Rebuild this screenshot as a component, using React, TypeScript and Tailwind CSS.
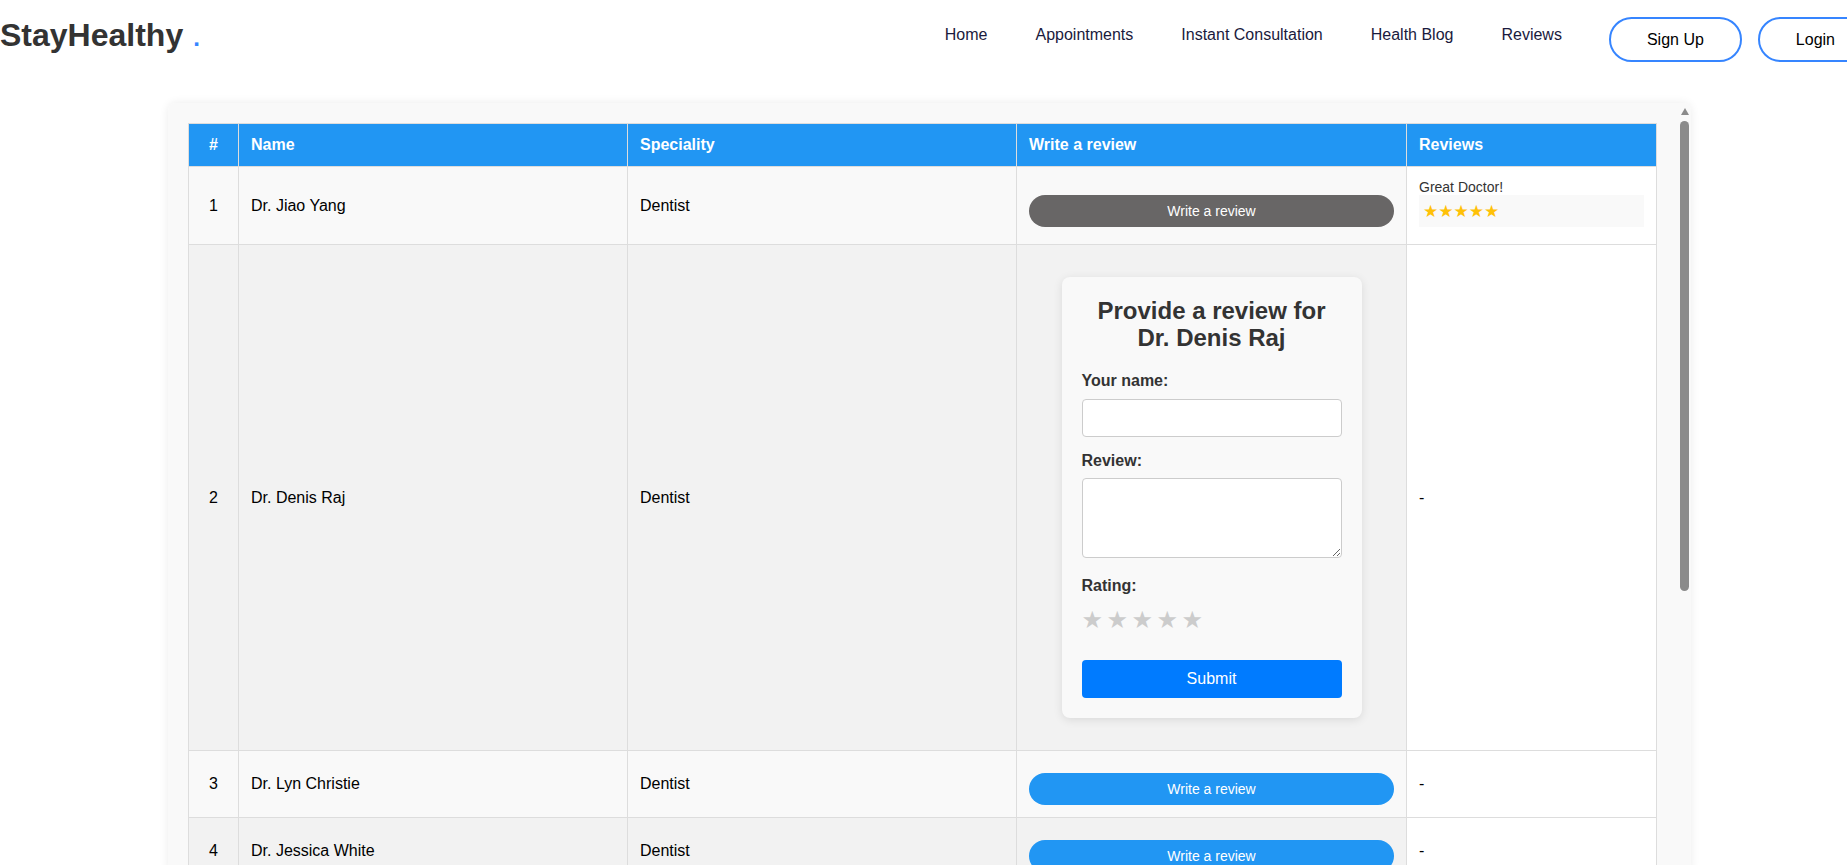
import { useState } from "react";

type Doctor = {
  id: number;
  name: string;
  speciality: string;
  review?: { text: string; rating: number };
};

const doctors: Doctor[] = [
  { id: 1, name: "Dr. Jiao Yang", speciality: "Dentist", review: { text: "Great Doctor!", rating: 5 } },
  { id: 2, name: "Dr. Denis Raj", speciality: "Dentist" },
  { id: 3, name: "Dr. Lyn Christie", speciality: "Dentist" },
  { id: 4, name: "Dr. Jessica White", speciality: "Dentist" },
  { id: 5, name: "Dr. Laura Evans", speciality: "Dentist" },
  { id: 6, name: "Dr. Mark Olsen", speciality: "Dentist" },
  { id: 7, name: "Dr. Priya Menon", speciality: "Dentist" },
  { id: 8, name: "Dr. Omar Haddad", speciality: "Dentist" },
  { id: 9, name: "Dr. Kate Moreno", speciality: "Dentist" },
  { id: 10, name: "Dr. Alan Brooks", speciality: "Dentist" },
];

const navLinks = ["Home", "Appointments", "Instant Consultation", "Health Blog", "Reviews"];

function ReviewForm({ doctor }: { doctor: Doctor }) {
  const [rating, setRating] = useState(0);

  return (
    <div className="mx-auto my-[20px] w-[300px] rounded-[8px] bg-[#f9f9f9] p-[20px] text-[#333] shadow-[0_2px_10px_rgba(0,0,0,0.1)]">
      <h2 className="mb-[21px] text-center text-[24px] font-bold leading-[27px]">
        Provide a review for {doctor.name}
      </h2>
      <label className="mb-[9px] block text-[16px] font-bold leading-[18px]">Your name:</label>
      <input
        type="text"
        className="mb-[15px] block h-[38px] w-full rounded-[4px] border border-[#ccc] bg-white px-2 text-[16px] outline-none"
      />
      <label className="mb-[8px] block text-[16px] font-bold leading-[18px]">Review:</label>
      <textarea className="mb-[19px] block h-[80px] w-full rounded-[4px] border border-[#ccc] bg-white p-2 text-[16px] outline-none" />
      <label className="block text-[16px] font-bold leading-[18px]">Rating:</label>
      <div className="mt-[10px] flex h-[30px] items-center gap-[3.5px] font-['DejaVu_Sans',sans-serif] text-[24px] leading-[30px]">
        {[1, 2, 3, 4, 5].map((n) => (
          <span
            key={n}
            onClick={() => setRating(n)}
            className={n <= rating ? "cursor-pointer text-[#ffc107]" : "cursor-pointer text-[#ccc]"}
          >
            ★
          </span>
        ))}
      </div>
      <button className="mt-[25px] block h-[38px] w-full rounded-[4px] bg-[#007bff] text-[16px] text-white">
        Submit
      </button>
    </div>
  );
}

export default function App() {
  const openId = 2;

  return (
    <div className="h-[865px] overflow-hidden bg-white font-['Liberation_Sans',Arial,sans-serif]">
      <header className="flex w-[1873px] items-start justify-between pt-[17px]">
        <h1 className="text-[32px] font-bold leading-[37px] text-[#333]">
          StayHealthy<span className="ml-[10px] text-[24px] text-[#3685ff]">.</span>
        </h1>
        <nav className="flex items-start">
          <ul className="mt-[9px] flex gap-[48px] text-[16px] leading-[18px] text-[#1a1a3d]">
            {navLinks.map((link) => (
              <li key={link}>
                <a href="#">{link}</a>
              </li>
            ))}
          </ul>
          <div className="ml-[47px] flex gap-[16px]">
            <button className="h-[45px] rounded-full border-2 border-[#3685ff] bg-white px-[36px] text-[16px] text-black">
              Sign Up
            </button>
            <button className="h-[45px] rounded-full border-2 border-[#3685ff] bg-white px-[36px] text-[16px] text-black">
              Login
            </button>
          </div>
        </nav>
      </header>

      <main className="pl-[168px] pt-[41px]">
        <div className="relative w-[1523px]">
          <div className="h-[772px] overflow-y-auto overflow-x-hidden rounded-[8px] bg-[#f9f9f9] p-[20px] shadow-[0_0_10px_rgba(0,0,0,0.08)] [scrollbar-width:none]">
            <table className="w-[1468px] table-fixed border-collapse text-[16px] leading-[18px] text-black">
              <colgroup>
                <col className="w-[50px]" />
                <col className="w-[389px]" />
                <col className="w-[389px]" />
                <col className="w-[390px]" />
                <col className="w-[250px]" />
              </colgroup>
              <thead>
                <tr className="bg-[#2196f3] text-white">
                  <th className="border border-[#ddd] p-[12px] text-center font-bold">#</th>
                  <th className="border border-[#ddd] p-[12px] text-left font-bold">Name</th>
                  <th className="border border-[#ddd] p-[12px] text-left font-bold">Speciality</th>
                  <th className="border border-[#ddd] p-[12px] text-left font-bold">Write a review</th>
                  <th className="border border-[#ddd] p-[12px] text-left font-bold">Reviews</th>
                </tr>
              </thead>
              <tbody>
                {doctors.map((doc, i) => (
                  <tr key={doc.id} className={i % 2 === 0 ? "bg-[#f9f9f9]" : "bg-[#f2f2f2]"}>
                    <td className="border border-[#ddd] p-[12px] text-center">{doc.id}</td>
                    <td className="border border-[#ddd] p-[12px]">{doc.name}</td>
                    <td className="border border-[#ddd] p-[12px]">{doc.speciality}</td>
                    <td className="border border-[#ddd] p-[12px]">
                      {doc.id === openId ? (
                        <ReviewForm doctor={doc} />
                      ) : (
                        <button
                          className={
                            doc.review
                              ? "mt-[10px] block h-[32px] w-full rounded-full bg-[#686666] text-[14px] text-white"
                              : "mt-[10px] block h-[32px] w-full rounded-full bg-[#2196f3] text-[14px] text-white"
                          }
                        >
                          Write a review
                        </button>
                      )}
                    </td>
                    <td className="border border-[#ddd] bg-white p-[12px]">
                      {doc.review ? (
                        <div>
                          <p className="text-[14px] leading-[16px] text-[#333]">{doc.review.text}</p>
                          <div className="mb-[5px] bg-[#f9f9f9] px-[4px] py-[5px] font-['DejaVu_Sans',sans-serif] text-[17px] leading-[22px] text-[#ffc107]">
                            {"★".repeat(doc.review.rating)}
                          </div>
                        </div>
                      ) : (
                        "-"
                      )}
                    </td>
                  </tr>
                ))}
              </tbody>
            </table>
          </div>

          {/* scrollbar drawn over the card */}
          <div className="pointer-events-none absolute right-[2px] top-[5px] flex w-[9px] flex-col items-center">
            <div className="h-0 w-0 border-x-[4.5px] border-b-[7px] border-x-transparent border-b-[#8b8b8b]" />
            <div className="mt-[6px] h-[470px] w-[9px] rounded-full bg-[#8b8b8b]" />
          </div>
        </div>
      </main>
    </div>
  );
}
